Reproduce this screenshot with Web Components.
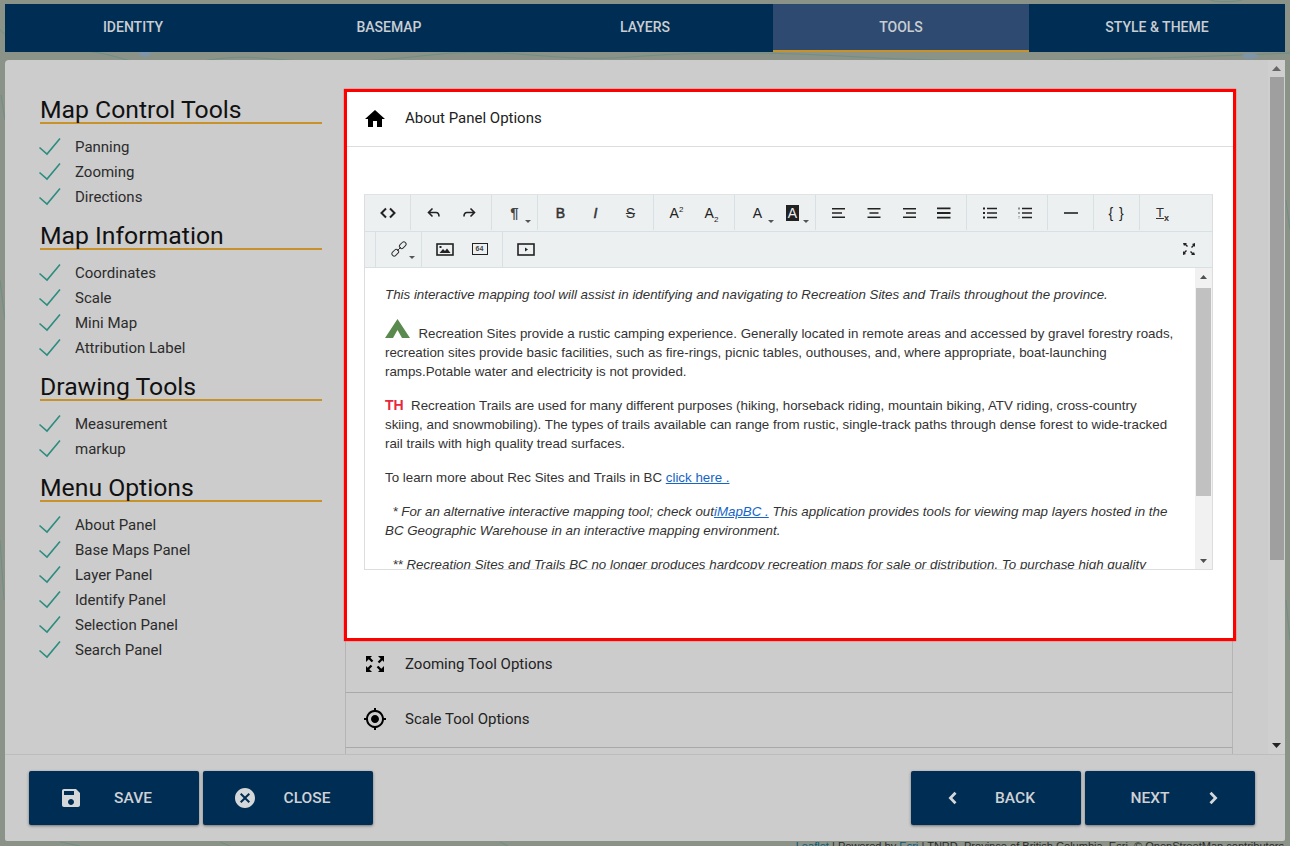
<!DOCTYPE html>
<html>
  <head>
    <meta charset="utf-8" />
    <title>Tools</title>
    <style>
      html, body { margin: 0; padding: 0; overflow: hidden; }
    </style>
  </head>

  <body>
    <map-shell>
      <tab-bar slot="tabs">
        <tab-item>IDENTITY</tab-item>
        <tab-item>BASEMAP</tab-item>
        <tab-item>LAYERS</tab-item>
        <tab-item active>TOOLS</tab-item>
        <tab-item>STYLE &amp; THEME</tab-item>
      </tab-bar>

      <tool-column slot="left">
        <section-title>Map Control Tools</section-title>
        <check-item>Panning</check-item>
        <check-item>Zooming</check-item>
        <check-item>Directions</check-item>
        <section-title>Map Information</section-title>
        <check-item>Coordinates</check-item>
        <check-item>Scale</check-item>
        <check-item>Mini Map</check-item>
        <check-item>Attribution Label</check-item>
        <section-title>Drawing Tools</section-title>
        <check-item>Measurement</check-item>
        <check-item>markup</check-item>
        <section-title>Menu Options</section-title>
        <check-item>About Panel</check-item>
        <check-item>Base Maps Panel</check-item>
        <check-item>Layer Panel</check-item>
        <check-item>Identify Panel</check-item>
        <check-item>Selection Panel</check-item>
        <check-item>Search Panel</check-item>
      </tool-column>

      <option-row slot="right" icon="home" open>
        About Panel Options
        <rich-editor slot="body">
          <p><i>This interactive mapping tool will assist in identifying and navigating to Recreation Sites and Trails throughout the province.</i></p>
          <p><svg class="tent" width="26" height="19" viewBox="0 0 26 19"><path fill="#5b8a4f" d="M12.5 0 25 19h-8L12.500 11 8 19H0z"/></svg>&nbsp; Recreation Sites provide a rustic camping experience. Generally located in remote areas and accessed by gravel forestry roads, recreation sites provide basic facilities, such as fire-rings, picnic tables, outhouses, and, where appropriate, boat-launching ramps.Potable water and electricity is not provided.</p>
          <p><b class="th">TH</b>&nbsp; Recreation Trails are used for many different purposes (hiking, horseback riding, mountain biking, ATV riding, cross-country skiing, and snowmobiling). The types of trails available can range from rustic, single-track paths through dense forest to wide-tracked rail trails with high quality tread surfaces.</p>
          <p>To learn more about Rec Sites and Trails in BC <a href="#">click here .</a></p>
          <p><i>&nbsp; * For an alternative interactive mapping tool; check out<a href="#">iMapBC .</a> This application provides tools for viewing map layers hosted in the BC Geographic Warehouse in an interactive mapping environment.</i></p>
          <p><i>&nbsp; ** Recreation Sites and Trails BC no longer produces hardcopy recreation maps for sale or distribution. To purchase high quality recreation maps, please visit your local retailer.</i></p>
        </rich-editor>
      </option-row>
      <option-row slot="right" icon="zoom">Zooming Tool Options</option-row>
      <option-row slot="right" icon="scale">Scale Tool Options</option-row>
      <option-row slot="right" icon="none">Mini Map Tool Options</option-row>

      <action-button slot="actions" icon="save">SAVE</action-button>
      <action-button slot="actions" icon="close">CLOSE</action-button>
      <span slot="actions" style="flex: 1"></span>
      <action-button slot="actions" icon="back">BACK</action-button>
      <action-button slot="actions" icon="next" trailing>NEXT</action-button>
    </map-shell>

    <script type="module">
      const PATHS = {
        home: "M10 20v-6h4v6h5v-8h3L12 3 2 12h3v8z",
        zoom: "M3 4h6L7.300 5.700l3 3-1.600 1.600-3-3L3 10zM21 4v6l-1.700-1.700-3 3-1.600-1.600 3-3L15 4zM3 20v-6l1.700 1.700 3-3 1.600 1.600-3 3L9 20zM21 20h-6l1.700-1.700-3-3 1.600-1.600 3 3L21 14z",
        scale: "M12 8c-2.210 0-4 1.790-4 4s1.790 4 4 4 4-1.790 4-4-1.790-4-4-4zm8.940 3c-.46-4.170-3.770-7.480-7.940-7.940V1h-2v2.060C6.830 3.520 3.520 6.830 3.060 11H1v2h2.060c.46 4.170 3.770 7.480 7.940 7.940V23h2v-2.060c4.170-.46 7.480-3.770 7.940-7.940H23v-2h-2.060zM12 19c-3.870 0-7-3.130-7-7s3.130-7 7-7 7 3.130 7 7-3.130 7-7 7z",
        save: "M17 3H5c-1.110 0-2 .9-2 2v14c0 1.100.89 2 2 2h14c1.100 0 2-.9 2-2V7l-4-4zm-5 16c-1.660 0-3-1.340-3-3s1.340-3 3-3 3 1.340 3 3-1.340 3-3 3zm3-10H5V5h10v4z",
        close: "M12 2C6.470 2 2 6.470 2 12s4.470 10 10 10 10-4.470 10-10S17.530 2 12 2zm5 13.590L15.590 17 12 13.410 8.410 17 7 15.590 10.590 12 7 8.410 8.410 7 12 10.590 15.590 7 17 8.410 13.410 12 17 15.590z",
        back: "M15.500 7.700 13.500 5.800 7.500 12l6 6.200 2-1.900L11.300 12z",
        next: "M8.500 7.700 10.500 5.800 16.500 12l-6 6.200-2-1.900L12.700 12z"
      };

      class MapShell extends HTMLElement {
        constructor() {
          super();
          this.attachShadow({ mode: "open" }).innerHTML = `
            <style>
              :host { display: block; position: relative; width: 1290px; height: 846px; overflow: hidden;
                background: #8b9287; font-family: Roboto, "Liberation Sans", sans-serif; }
              .map { position: absolute; inset: 0; }
              .frame { position: relative; display: flex; flex-direction: column; height: 100%; box-sizing: border-box; padding: 4px 5px 5px; }
              .tabs { height: 48px; margin-bottom: 8px; flex: none; }
              .modal { flex: 1; display: flex; flex-direction: column; min-height: 0; background: #ccc; border-radius: 4px 4px 2px 2px; }
              .main { height: 694px; flex: none; display: flex; overflow: hidden; }
              .content { flex: 1; display: flex; gap: 22px; padding: 29px 32px 0 35px; min-width: 0; }
              .left { width: 282px; flex: none; padding-top: 7px; }
              .right { width: 892px; flex: none; margin-right: -32px; position: relative; }
              .bar { width: 17px; flex: none; display: flex; flex-direction: column; align-items: center; background: #cfcfcf; }
              .arrow { height: 17px; width: 17px; display: flex; align-items: center; justify-content: center; }
              .thumb { width: 14px; height: 483px; background: #9f9f9f; }
              .fill { flex: 1; }
              .footer { flex: 1; display: flex; gap: 4px; align-items: flex-start; padding: 16px 30px 0 24px; border-top: 1px solid #bdbdbd; box-sizing: border-box; }
              .credit { position: absolute; top: 840px; right: 6px; font: 11.050px "Liberation Sans", sans-serif; color: #2a2a2a; white-space: nowrap; }
              .credit b { font-weight: 400; color: #0a5a7a; }
            </style>
            <svg class="map" viewBox="0 0 1290 846" fill="none" stroke="#6f8f86" stroke-width="1">
              <path d="M0 30C30 60 60 40 120 58s80-5 140 0 90 6 170-3 120 8 200 2 140-5 230 0 200 6 430-4"/>
              <path d="M1 95 5 120M0 280 5 320M0 540 4 600M1286 200l4 30M1286 600l4 40"/>
              <path d="M60 842 80 846M220 842l10 4M500 842l8 4M1210 0c8 3 30 2 34 -1" />
              <ellipse cx="145" cy="54" rx="6" ry="3" fill="#7f95a8" stroke="none"/>
              <ellipse cx="1250" cy="56" rx="8" ry="3" fill="#7f95a8" stroke="none"/>
            </svg>
            <div class="frame">
              <div class="tabs"><slot name="tabs"></slot></div>
              <div class="modal">
                <div class="main">
                  <div class="content">
                    <div class="left"><slot name="left"></slot></div>
                    <div class="right"><slot name="right"></slot></div>
                  </div>
                  <div class="bar">
                    <div class="arrow"><svg width="9" height="5"><path d="M4.500 0 9 5H0z" fill="#666"/></svg></div>
                    <div class="thumb"></div>
                    <div class="fill"></div>
                    <div class="arrow"><svg width="9" height="5"><path d="M0 0h9L4.500 5z" fill="#222"/></svg></div>
                  </div>
                </div>
                <div class="footer"><slot name="actions"></slot></div>
              </div>
            </div>
            <div class="credit"><b>Leaflet</b> | Powered by <b>Esri</b> | TNRD, Province of British Columbia, Esri, © OpenStreetMap contributors</div>`;
        }
      }

      class TabBar extends HTMLElement {
        constructor() {
          super();
          this.attachShadow({ mode: "open" }).innerHTML = `
            <style>:host { display: grid; grid-template-columns: repeat(5, 1fr); height: 100%; background: #002d54; }</style>
            <slot></slot>`;
        }
      }

      class TabItem extends HTMLElement {
        constructor() {
          super();
          this.attachShadow({ mode: "open" }).innerHTML = `
            <style>
              :host { display: flex; align-items: center; justify-content: center; box-sizing: border-box; padding-bottom: 3px;
                color: #c9ced3; font: 500 14px Roboto, sans-serif; }
              :host([active]) { background: #2e4a70; border-bottom: 2px solid #c8922a; padding-bottom: 1px; }
            </style>
            <slot></slot>`;
        }
      }

      class SectionTitle extends HTMLElement {
        constructor() {
          super();
          this.attachShadow({ mode: "open" }).innerHTML = `
            <style>
              :host { display: block; box-sizing: border-box; height: 28px; margin: 13px 0 10px;
                font: 400 24.750px/27px Roboto, sans-serif; color: #111; border-bottom: 2px solid #c8922a; white-space: nowrap; }
              :host(:first-child) { margin-top: 0; }
            </style>
            <slot></slot>`;
        }
      }

      class ToolColumn extends HTMLElement {
        constructor() {
          super();
          this.attachShadow({ mode: "open" }).innerHTML = `<style>:host { display: block; }</style><slot></slot>`;
        }
      }

      class CheckItem extends HTMLElement {
        constructor() {
          super();
          this.attachShadow({ mode: "open" }).innerHTML = `
            <style>
              :host { display: flex; align-items: center; height: 25px; font: 400 15px Roboto, sans-serif; color: #2b2b2b; }
              svg { width: 23px; height: 19px; margin: 0 14px 0 -2px; flex: none; }
            </style>
            <svg viewBox="0 0 23 19" fill="none" stroke="#2b8c7f" stroke-width="1.600"><path d="M1.500 10.500 9 17 22 1.500"/></svg>
            <slot></slot>`;
        }
      }

      class OptionRow extends HTMLElement {
        constructor() {
          super();
          const icon = this.getAttribute("icon");
          const glyph = PATHS[icon] ? `<svg viewBox="0 0 24 24" width="24" height="24"><path d="${PATHS[icon]}"/></svg>` : "";
          this.attachShadow({ mode: "open" }).innerHTML = `
            <style>
              :host { display: block; box-sizing: border-box; margin: 0 3px 0 1px; border-bottom: 1px solid #a9a9a9;
                border-left: 1px solid #b4b4b4; border-right: 1px solid #b4b4b4; background: #ccc; color: #222; }
              :host([open]) { position: relative; z-index: 1; margin: 0 0 -3px 0; border: 3px solid #f00; background: #fff; box-shadow: 0 0 1px #f00; }
              .head { display: flex; align-items: center; height: 54px; padding-bottom: 3px; box-sizing: border-box; font: 400 15px Roboto, sans-serif; }
              :host([open]) .head { height: 55px; border-bottom: 1px solid #ddd; padding-bottom: 2px; }
              .ico { width: 24px; height: 24px; margin: 1px 18px 0 17px; flex: none; fill: #000; }
              :host([open]) .ico { margin-left: 16px; }
              .body { display: none; padding: 47px 20px 68px 17px; }
              :host([open]) .body { display: block; }
            </style>
            <div class="head"><div class="ico">${glyph}</div><slot></slot></div>
            <div class="body"><slot name="body"></slot></div>`;
        }
      }

      const ln = (d, w = 1.6) => `<svg width="18" height="18" viewBox="0 0 18 18" fill="none" stroke="#222" stroke-width="${w}"><path d="${d}"/></svg>`;
      const fl = (d) => `<svg width="18" height="18" viewBox="0 0 18 18" fill="#222"><path d="${d}"/></svg>`;
      const txt = (t, style = "") => `<span class="t" style="${style}">${t}</span>`;

      const TOOLS = {
        code: ln("M7 4.500 2.500 9 7 13.500M11 4.500 15.500 9 11 13.500", 2),
        undo: ln("M7.500 4.500 3.500 8.500l4 4M3.500 8.500H11c2 0 3 1.500 3 4"),
        redo: ln("M10.500 4.500l4 4-4 4M14.500 8.500H7c-2 0-3 1.500-3 4"),
        para: txt("¶", "font-size:15px;font-weight:700;color:#444"),
        bold: txt("B", "font-size:14px;-webkit-text-stroke:.5px #333;color:#333"),
        ital: txt("I", "font-size:14px;font-style:italic;-webkit-text-stroke:.5px #333;color:#333"),
        strk: txt("S", "font-size:14px;text-decoration:line-through;color:#333"),
        sup: txt('A<sup>2</sup>', "font-size:14px"),
        sub: txt('A<sub>2</sub>', "font-size:14px"),
        fore: txt("A", "font-size:14px"),
        back: txt("A", "font-size:14px;color:#ecf0f1;background:#222;padding:0 2px;line-height:16px"),
        al: fl("M2 4h13v1.500H2zM2 8.250h10v1.500H2zM2 12.500h13V14H2z"),
        ac: fl("M2.500 4h13v1.500h-13zM4.500 8.250h9v1.500h-9zM2.500 12.500h13V14h-13z"),
        ar: fl("M3 4h13v1.500H3zM6 8.250h10v1.500H6zM3 12.500h13V14H3z"),
        aj: fl("M2 3.500h13.500v1.800H2zM2 8.100h13.500v1.800H2zM2 12.700h13.500v1.800H2z"),
        ul: fl("M2 3.500h2v2H2zM2 8h2v2H2zM2 12.500h2v2H2zM6 3.800h10v1.400H6zM6 8.300h10v1.400H6zM6 12.800h10v1.400H6z"),
        ol: fl("M2.500 3.500h1v2h-1zM2.500 8h1v.8h-1zM2.500 9.300h1v.8h-1zM2.500 12.500h1v.6h-1zM2.500 13.700h1v.6h-1zM6 3.700h10v1.500H6zM6 8.200h10v1.500H6zM6 12.700h10v1.500H6z"),
        hr: fl("M2 8.200h14v1.600H2z"),
        brace: txt("{ }", "font-size:14px;letter-spacing:1px"),
        clear: txt('<u>T</u><sub style="font-size:9px;font-weight:700">x</sub>', "font-size:13px;color:#333"),
        link: `<svg width="18" height="18" viewBox="0 0 18 18" fill="none" stroke="#333" stroke-width="1"><rect x="1.500" y="10.500" width="7.500" height="4.500" rx="2.200" transform="rotate(-45 5.200 12.700)"/><rect x="9" y="3" width="7.500" height="4.500" rx="2.200" transform="rotate(-45 12.700 5.200)"/><path d="M7 11 11 7"/></svg>`,
        image: `<svg width="18" height="13" viewBox="0 0 18 13"><rect x="1" y="1" width="16" height="11" fill="none" stroke="#222" stroke-width="1.600"/><path d="M3.500 10 7 6l2 2 2-2.500L14.500 10z" fill="#222"/><rect x="3.500" y="3" width="2" height="2" fill="#222"/></svg>`,
        b64: `<span class="box">64</span>`,
        video: `<svg width="18" height="13" viewBox="0 0 18 13"><rect x="1" y="1" width="16" height="11" fill="none" stroke="#222" stroke-width="1.600"/><path d="M8 4.500 11 6.500 8 8.500z" fill="#222"/></svg>`,
        full: fl("M3 3h4L6 4l2 2-1 1-2-2-1 1zM15 3v4l-1-1-2 2-1-1 2-2-1-1zM3 15v-4l1 1 2-2 1 1-2 2 1 1zM15 15h-4l1-1-2-2 1-1 2 2 1-1z")
      };

      const ROWS = [
        [["code"], ["undo", "redo"], ["para^"], ["bold", "ital", "strk"], ["sup", "sub"], ["fore^", "back^"], ["al", "ac", "ar", "aj"], ["ul", "ol"], ["hr"], ["brace"], ["clear"]],
        [[], ["link^"], ["image", "b64"], ["video"]]
      ];

      const button = (name) => {
        const caret = name.endsWith("^");
        const key = caret ? name.slice(0, -1) : name;
        return `<span class="btn">${TOOLS[key]}${caret ? '<i class="caret"></i>' : ""}</span>`;
      };

      class RichEditor extends HTMLElement {
        constructor() {
          super();
          const rows = ROWS.map((groups, i) => {
            const cells = groups.map((g, j) => `<span class="group${j === groups.length - 1 ? " last" : ""}">${g.map(button).join("")}</span>`).join("");
            const last = i === 1 ? `<span class="btn end">${TOOLS.full}</span>` : "";
            return `<div class="row">${cells}${last}</div>`;
          }).join("");
          this.attachShadow({ mode: "open" }).innerHTML = `
            <style>
              :host { display: block; height: 376px; box-sizing: border-box; border: 1px solid #ddd; border-top-color: #dfe3e5; position: relative; overflow: hidden;
                font-family: "Liberation Sans", Arial, sans-serif; }
              .row { display: flex; height: 37px; background: #ecf0f1; border-bottom: 1px solid #d7e0e2; box-sizing: border-box; }
              .row + .row { height: 36px; }
              .row + .row .btn { height: 34px; }
              .group { display: flex; padding: 0 5px; border-right: 1px solid #d7e0e2; height: 35px; }
              .group.last { border-right: 0; }
              .btn { position: relative; width: 35px; height: 35px; display: flex; align-items: center; justify-content: center; flex: none; color: #222; }
              .btn svg { display: block; }
              .end { margin-left: auto; margin-right: 6px; }
              .t { line-height: 1; font-family: "Liberation Sans", sans-serif; }
              .t sup, .t sub { font-size: 8px; line-height: 0; }
              .caret { position: absolute; right: 1px; bottom: 7px; border: 3px solid transparent; border-top-color: #555; border-bottom: 0; }
              .box { box-sizing: border-box; border: 1.600px solid #222; width: 16px; height: 12px; font: 700 7px/9px "Liberation Sans", sans-serif; text-align: center; color: #444; }
              .text { display: flex; height: 301px; }
              .scroll { flex: 1; padding: 17px 20px 0 20px; overflow: hidden; font-size: 13.330px; line-height: 19px; color: #333; }
              .bar { width: 17px; flex: none; display: flex; flex-direction: column; align-items: center; background: #f1f1f1; }
              .arrow { height: 17px; width: 17px; display: flex; align-items: center; justify-content: center; }
              .thumb { width: 15px; height: 208px; margin-top: 3px; background: #c1c1c1; }
              .fill { flex: 1; }
              ::slotted(p) { margin: 0 0 15px; }
            </style>
            ${rows}
            <div class="text">
              <div class="scroll"><slot></slot></div>
              <div class="bar">
                <div class="arrow"><svg width="7" height="4"><path d="M3.500 0 7 4H0z" fill="#505050"/></svg></div>
                <div class="thumb"></div>
                <div class="fill"></div>
                <div class="arrow"><svg width="7" height="4"><path d="M0 0h7L3.500 4z" fill="#505050"/></svg></div>
              </div>
            </div>`;
        }
      }

      class ActionButton extends HTMLElement {
        constructor() {
          super();
          const path = PATHS[this.getAttribute("icon")];
          this.attachShadow({ mode: "open" }).innerHTML = `
            <style>
              :host { display: flex; align-items: center; width: 170px; height: 54px; box-sizing: border-box; padding-left: 30px;
                background: #002d54; border-radius: 2px; color: #cfd2d5; font: 500 15.500px Roboto, sans-serif;
                box-shadow: 0 1px 3px rgba(0,0,0,.45); }
              :host([trailing]) { flex-direction: row-reverse; justify-content: flex-end; padding-left: 45px; }
              svg { width: 24px; height: 24px; fill: #d5d8da; margin-right: 30px; flex: none; }
              :host([trailing]) svg { margin: 0 0 0 31px; }
              .label { display: block; width: 40px; text-align: center; white-space: nowrap; }
              .label span { margin: 0 -10px; }
            </style>
            <svg viewBox="0 0 24 24"><path d="${path}"/></svg>
            <span class="label"><span><slot></slot></span></span>`;
        }
      }

      customElements.define("map-shell", MapShell);
      customElements.define("tab-bar", TabBar);
      customElements.define("tab-item", TabItem);
      customElements.define("tool-column", ToolColumn);
      customElements.define("section-title", SectionTitle);
      customElements.define("check-item", CheckItem);
      customElements.define("option-row", OptionRow);
      customElements.define("rich-editor", RichEditor);
      customElements.define("action-button", ActionButton);
    </script>
    <style>
      rich-editor a { color: #1565c8; }
      rich-editor .th { color: #e8263c; font: 700 14px "Liberation Sans", sans-serif; }
    </style>
  </body>
</html>
